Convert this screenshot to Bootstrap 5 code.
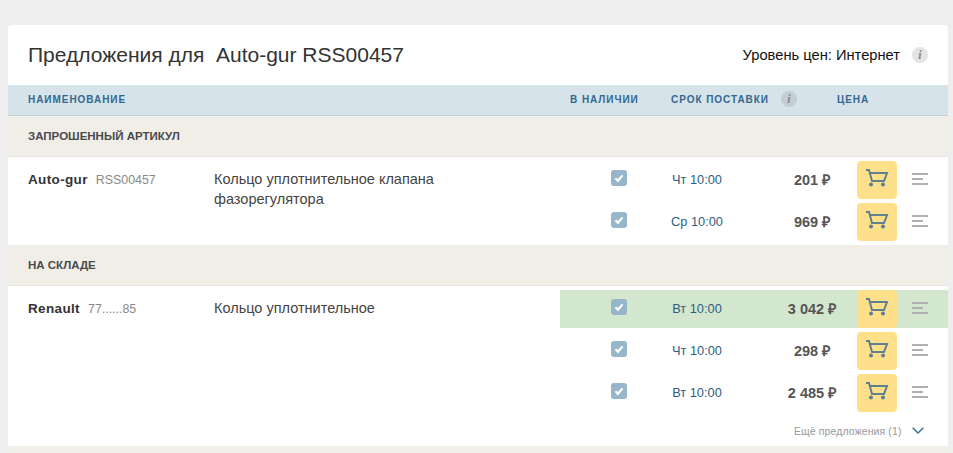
<!DOCTYPE html>
<html lang="ru"><head><meta charset="utf-8"><title>Предложения</title>
<link rel="stylesheet" href="https://cdn.jsdelivr.net/npm/bootstrap@5.3.0/dist/css/bootstrap.min.css">
<style>
html,body{height:453px;overflow:hidden}
body{background:#eee;font-family:"Liberation Sans",Arial,sans-serif;color:#444;font-size:14.5px;line-height:20px;padding:25px 5px 0 8px}
.sheet{background:#fff;border-radius:3px;height:428px;overflow:hidden}
.sheet-head{height:60px;padding:0 20px}
.sheet-title{font-size:21px;line-height:28px;font-weight:400;color:#333;margin:0;white-space:pre}
.level{color:#111;font-size:14.7px}
.info-dot{width:16px;height:16px;border-radius:50%;background:#e4e4e4;color:#888;font:italic bold 12px/16px "Liberation Serif",serif;text-align:center;flex:none}
.thead-bar{height:31px;background:#d7e3ea;border-bottom:1px solid #c2d0da;color:#33688f;font-size:10px;font-weight:700;letter-spacing:.95px;padding-left:20px}
.thead-bar .info-dot{background:#c5ced4;margin-left:12px;margin-top:-2px;letter-spacing:0}
.th-name{width:542px}
.th-stock{width:101px}
.th-term{width:166px}
.group-bar{height:41px;background:#f1eee8;border-bottom:1px solid #e6e6e2;font-size:11.5px;font-weight:700;color:#4a4a4a;padding:0 20px}
.item{padding-left:20px}
.item-brand{width:186px;padding-top:12px;white-space:nowrap}
.item-brand b{color:#333;font-size:13.5px;letter-spacing:.35px;margin-right:4px}
.item-brand span{color:#888;font-size:12.4px}
.item-desc{width:346px;padding-top:12px;color:#444;padding-right:100px}
.offers{width:388px;padding-top:4px}
.offer{height:38px;margin-bottom:4px}
.offer-hot{background:#d3e7cf}
.stock{width:100px;padding-left:51px}
.tick{width:16px;height:16px;border-radius:3px;background:#97b6c9;display:block;margin-top:-4px}
.term{width:74px;text-align:center;color:#2f5d80;font-size:12.8px}
.price{width:123px;padding-left:33px;text-align:center;font-weight:700;font-size:14.5px;color:#555}
.buy{width:40px;height:38px;background:#ffe08a;border:0;border-radius:4px;padding:0;flex:none}
.buy svg{display:block;margin:-4px auto 0}
.lines{width:16px;height:12px;margin-left:15px;flex:none;margin-top:-2px}
.more{height:34px;padding-left:234px;padding-top:3px;font-size:10.5px;color:#999;margin-top:-4px;letter-spacing:.1px}
.more svg{margin-left:10px}
</style></head>
<body>
<div class="sheet">
  <div class="sheet-head d-flex align-items-center justify-content-between">
    <h1 class="sheet-title">Предложения для  Auto-gur RSS00457</h1>
    <div class="d-flex align-items-center gap-2"><span class="level">Уровень цен: Интернет</span><span class="info-dot ms-1">i</span></div>
  </div>
  <div class="thead-bar d-flex align-items-center">
    <div class="th-name">НАИМЕНОВАНИЕ</div><div class="th-stock">В НАЛИЧИИ</div>
    <div class="d-flex align-items-center th-term"><span>СРОК ПОСТАВКИ</span><span class="info-dot">i</span></div><div>ЦЕНА</div>
  </div>
  <div class="group-bar d-flex align-items-center">ЗАПРОШЕННЫЙ АРТИКУЛ</div>
  <div class="item d-flex" style="height:88px">
    <div class="item-brand"><b>Auto-gur</b> <span>RSS00457</span></div>
    <div class="item-desc">Кольцо уплотнительное клапана фазорегулятора</div>
    <div class="offers" id="o1"></div>
  </div>
  <div class="group-bar d-flex align-items-center">НА СКЛАДЕ</div>
  <div class="item d-flex" style="height:160px">
    <div class="item-brand"><b>Renault</b> <span>77......85</span></div>
    <div class="item-desc">Кольцо уплотнительное</div>
    <div class="offers" id="o2"></div>
  </div>
  <div class="group-bar"></div>
</div>
<script>
const row=(t,p,h)=>`<div class="offer d-flex align-items-center${h?' offer-hot':''}">
<div class="stock"><svg class="tick" viewBox="0 0 16 16"><path d="M4.500 8.300l2.400 2.500 4.600-5.400" fill="none" stroke="#fff" stroke-width="2.200"/></svg></div>
<div class="term">${t}</div><div class="price">${p}</div>
<button class="buy" aria-label="В корзину"><svg width="24" height="20" viewBox="0 0 24 20"><path d="M1 2h3l3 11h12l3-8H5" fill="none" stroke="#5f8090" stroke-width="2"/><circle cx="6" cy="16.500" r="2" fill="#5f8090"/><circle cx="18" cy="16.500" r="2" fill="#5f8090"/></svg></button>
<svg class="lines" viewBox="0 0 16 12"><path d="M0 1h16M0 6h11M0 11h16" stroke="#b0b0b0" stroke-width="2"/></svg></div>`;
document.getElementById('o1').innerHTML=row('Чт 10:00','201 ₽')+row('Ср 10:00','969 ₽');
document.getElementById('o2').innerHTML=row('Вт 10:00','3 042 ₽',1)+row('Чт 10:00','298 ₽')+row('Вт 10:00','2 485 ₽')+
`<div class="more d-flex align-items-center">Ещё предложения (1)<svg width="12" height="7" viewBox="0 0 12 7"><path d="M.7.7L6 6l5.300-5.300" fill="none" stroke="#33688f" stroke-width="1.300"/></svg></div>`;
</script>
</body></html>
